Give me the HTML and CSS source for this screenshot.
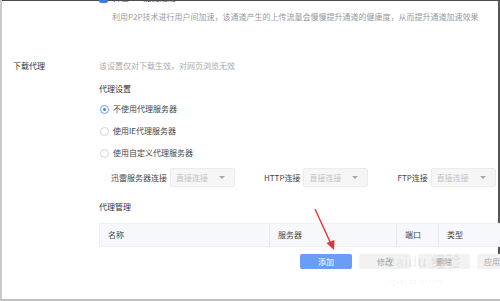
FILE: index.html
```html
<!DOCTYPE html>
<html>
<head>
    <title>下载代理设置</title>
    <link rel="stylesheet" href="styles.css">
</head>
<body>
<div class="screen">
    <div class="panel">
        <div class="section">
            <div class="label"></div>
            <div class="content">
                <div class="check-row">
                    <span class="checkbox"></span>
                    <span class="check-text">开启P2P加速通道</span>
                </div>
                <div class="desc">利用P2P技术进行用户间加速，该通道产生的上传流量会慢慢提升通道的健康度，从而提升通道加速效果</div>
            </div>
        </div>

        <div class="section proxy">
            <div class="label">下载代理</div>
            <div class="content">
                <div class="hint">该设置仅对下载生效，对网页浏览无效</div>
                <div class="sub-title">代理设置</div>
                <div class="radio-row"><span class="radio checked"></span>不使用代理服务器</div>
                <div class="radio-row"><span class="radio"></span>使用IE代理服务器</div>
                <div class="radio-row"><span class="radio"></span>使用自定义代理服务器</div>

                <div class="conn-row">
                    <div class="conn"><span class="conn-label">迅雷服务器连接</span><span class="select">直接连接<i class="caret"></i></span></div>
                    <div class="conn"><span class="conn-label">HTTP连接</span><span class="select">直接连接<i class="caret"></i></span></div>
                    <div class="conn"><span class="conn-label">FTP连接</span><span class="select">直接连接<i class="caret"></i></span></div>
                </div>

                <div class="sub-title manage">代理管理</div>
                <div class="table-head">
                    <div class="cell c-name">名称</div>
                    <div class="cell c-server">服务器</div>
                    <div class="cell c-port">端口</div>
                    <div class="cell c-type">类型</div>
                </div>
                <div class="btn-row">
                    <button class="btn primary">添加</button>
                    <button class="btn">修改</button>
                    <button class="btn">删除</button>
                    <button class="btn last">应用</button>
                </div>
            </div>
        </div>
    </div>

    <!-- 红色箭头标注 -->
    <svg class="arrow" width="40" height="50" viewBox="0 0 40 50">
        <line x1="3" y1="2" x2="19" y2="37" stroke="#e2323c" stroke-width="1.4"/>
        <polygon points="22,43 14.5,36 22.5,33" fill="#e2323c"/>
    </svg>

    <div class="watermark">
        <div class="wm-logo">Baidu 经验</div>
        <div class="wm-url">jingyan.baidu.com</div>
    </div>
</div>
</body>
</html>
```

FILE: styles.css
```css
body {
    margin: 0;
    background-color: #fff;
    font-family: "Noto Sans CJK SC", "Liberation Sans", sans-serif;
}

.screen {
    position: relative;
    width: 500px;
    height: 301px;
    box-sizing: border-box;
    overflow: hidden;
    border-left: 2px solid #c9c9c9;
    border-bottom: 2px solid #bdbdbd;
    background-color: #fff;
}

.panel {
    height: 266px;
    margin-left: -2px;
    box-sizing: border-box;
    border-top: 1px solid #4a4a4a;
    border-left: 2px solid #555;
    border-right: 2px solid #555;
    font-size: 8px;
    line-height: 12px;
    color: #444;
}

.section {
    display: flex;
}

.label {
    width: 86px;
    flex-shrink: 0;
    padding-left: 11px;
    color: #333;
}

.content {
    flex: 1;
}

/* P2P 区块（只露出一点） */
.check-row {
    display: flex;
    align-items: center;
    height: 10px;
    margin-top: -8px;
}

.checkbox {
    width: 9px;
    height: 10px;
    border-radius: 2px;
    background-color: #3b7ae8;
    margin-right: 5px;
}

.check-text {
    color: #555;
}

.desc {
    margin-top: 8px;
    padding-left: 13px;
    color: #9a9a9a;
    white-space: nowrap;
}

/* 下载代理 */
.proxy {
    margin-top: 37px;
}

.hint {
    color: #aaa;
}

.sub-title {
    margin-top: 11px;
    margin-bottom: 3px;
    color: #333;
}

.radio-row {
    display: flex;
    align-items: center;
    height: 22px;
    color: #444;
}

.radio {
    width: 7px;
    height: 7px;
    border: 1px solid #d4d4d4;
    border-radius: 50%;
    margin: 0 4px 0 1px;
    box-sizing: content-box;
    position: relative;
}

.radio.checked {
    border-color: #6a9cf2;
}

.radio.checked::after {
    content: "";
    position: absolute;
    left: 2px;
    top: 2px;
    width: 3px;
    height: 3px;
    border-radius: 50%;
    background-color: #3e7df0;
}

.conn-row {
    display: flex;
    align-items: center;
    margin-top: 4px;
    padding-left: 12px;
    gap: 29px;
    white-space: nowrap;
}

.conn {
    display: flex;
    align-items: center;
}

.conn-label {
    margin-right: 3px;
    color: #444;
}

.select {
    position: relative;
    width: 65px;
    height: 19px;
    box-sizing: border-box;
    padding-left: 5px;
    line-height: 17px;
    border: 1px solid #ececec;
    border-radius: 2px;
    background-color: #f6f6f6;
    color: #c2c2c2;
}

.caret {
    position: absolute;
    right: 9px;
    top: 7px;
    border-left: 3px solid transparent;
    border-right: 3px solid transparent;
    border-top: 3px solid #a8a8a8;
}

.manage {
    margin-top: 14px;
    margin-bottom: 0;
}

.table-head {
    display: flex;
    height: 24px;
    margin-top: 10px;
    box-sizing: border-box;
    border: 1px solid #eef0f5;
    background-color: #f6f8fc;
    width: 420px;
}

.cell {
    padding-left: 8px;
    line-height: 22px;
    color: #444;
    box-sizing: border-box;
    border-right: 1px solid #e6e8ee;
}

.c-name { width: 170px; }
.c-server { width: 127px; }
.c-port { width: 42px; }
.c-type { flex: 1; border-right: none; }

.btn-row {
    display: flex;
    gap: 7px;
    margin-top: 7px;
    padding-left: 201px;
}

.btn {
    width: 52px;
    height: 15px;
    padding: 0;
    flex-shrink: 0;
    border: none;
    border-radius: 2px;
    background-color: #f2f2f2;
    color: #a5a5a5;
    font-family: inherit;
    font-size: 8px;
    line-height: 15px;
}

.btn.last {
    width: 30px;
}

.btn.primary {
    background-color: #6c9df6;
    color: #fff;
}

.arrow {
    position: absolute;
    left: 310px;
    top: 207px;
}

.watermark {
    position: absolute;
    left: 383px;
    top: 252px;
    color: rgba(0, 0, 0, 0.06);
    font-family: "Liberation Sans", "Noto Sans CJK SC", sans-serif;
}

.wm-logo {
    font-size: 15px;
    font-weight: bold;
    line-height: 20px;
}

.wm-url {
    font-size: 7px;
    line-height: 10px;
    margin-top: 5px;
}
```
